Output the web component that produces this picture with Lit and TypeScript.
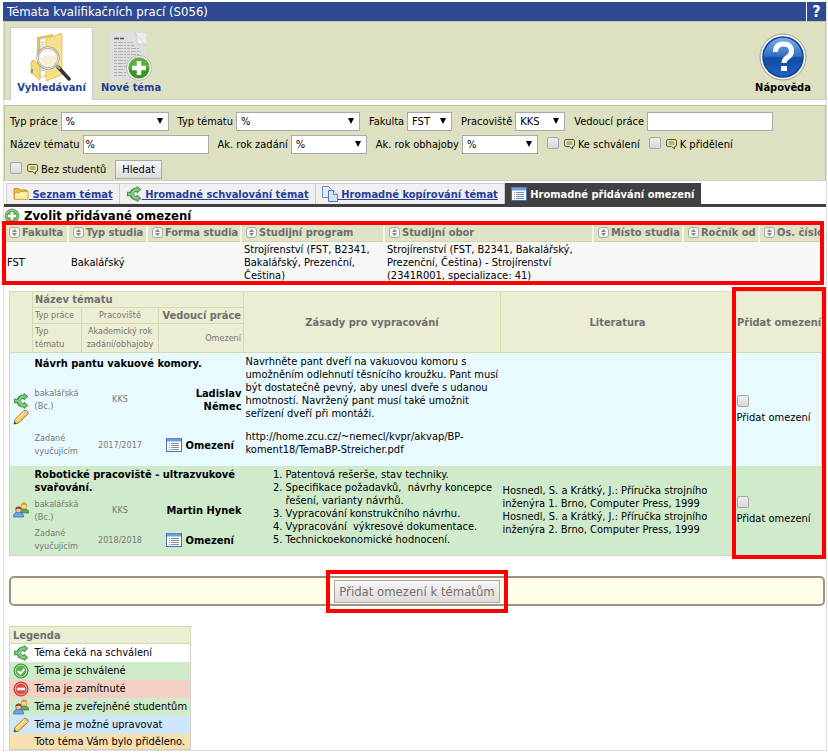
import { LitElement, html, css, svg } from "lit";
import { customElement } from "lit/decorators.js";

const ICONS: Record<string, unknown> = {
  approve: svg`<path d="M1 8h5M6 8C6 4.500 8 3.500 12 3.500M6 8c0 3.500 2 4.500 6 4.500" fill="none" stroke="#3f8f4c" stroke-width="4.500"/><path d="M11 .5l4 3-4 3.500zM11 9l4 3.500-4 3z" fill="#6dba6d" stroke="#3f8f4c" stroke-width=".8"/><path d="M2 8h5M6.500 8C6.500 5 8 3.500 12 3.500M6.500 8c0 3 1.500 4.500 5.500 4.500" fill="none" stroke="#85c885" stroke-width="2.500"/>`,
  pencil: svg`<path d="M1 15l1-4.500L11 1.500q2-1 3.500 1t0 3L5.500 14z" fill="#f7cf62" stroke="#ad7420"/><path d="M3.500 11L11.500 3" stroke="#fff0a8" stroke-width="1.500"/><path d="M10.500 2l3.500 3.500" stroke="#c9cdd6" stroke-width="1.500"/><path d="M1 15l.5-2.500 2 2z" fill="#333"/>`,
  users: svg`<path d="M6 11q0-4 5-4t5 4z" fill="#5aa858" stroke="#2d7a35" stroke-width=".6"/><circle cx="11" cy="4" r="3" fill="#fbd69a" stroke="#c48a2c" stroke-width=".7"/><path d="M8 3.500q0-3 3-3t3 3q-3-1.500-6 0z" fill="#dc9f2e"/><path d="M.5 15q0-5 5-5t5 5z" fill="#6ba5ee" stroke="#2b62b5" stroke-width=".7"/><circle cx="5.500" cy="8" r="2.800" fill="#f5c49b" stroke="#80502c" stroke-width=".7"/><path d="M2.500 7.500q0-3 3-3t3 3q-3-1.500-6 0z" fill="#80502c"/>`,
  list: svg`<rect x=".5" y="1.500" width="15" height="13" fill="#fff" stroke="#4a6eb5"/><path d="M1 3h14" stroke="#6f9be0" stroke-width="3"/><path d="M3 6.500h1M3 8.500h1M3 10.500h1M3 12.500h1M5 6.500h8M5 8.500h8M5 10.500h8M5 12.500h8" stroke="#8290a8"/>`,
  folder: svg`<path d="M1 13V2.500h5l1 1.500h7v9z" fill="#e9b94c" stroke="#c99a35"/><path d="M1.500 13.500V7h5l1-1.500H15v8z" fill="#ffe796" stroke="#d7a637"/><path d="M3 8.500h10" stroke="#fffbe0" stroke-width="1.500"/>`,
  copy: svg`<path d="M.5.500h6l3 3v8h-9z" fill="#e1ecfd" stroke="#6b8fc9"/><path d="M6.500 4.500h5l4 4v7h-9z" fill="#d2e3fc" stroke="#5078b8"/><path d="M11.500 4.500v4h4" fill="#fff" stroke="#5078b8"/>`,
  plus: svg`<circle cx="8" cy="8" r="7" fill="#5fae55" stroke="#6c9b65"/><circle cx="8" cy="8" r="5.800" fill="none" stroke="#a9d6a0" stroke-width=".8"/><path d="M8 4v8M4 8h8" stroke="#fff" stroke-width="2.600"/>`,
  ok: svg`<circle cx="8" cy="8" r="7" fill="#58b14e" stroke="#3c8a3c"/><circle cx="8" cy="8" r="5.800" fill="none" stroke="#b9e3ae"/><path d="M4.800 8l2.500 2.500L11.500 6" fill="none" stroke="#fff" stroke-width="2"/>`,
  deny: svg`<circle cx="8" cy="8" r="7" fill="#dc4c42" stroke="#b33a34"/><circle cx="8" cy="8" r="5.800" fill="none" stroke="#f2a8a0"/><path d="M4 8h8" stroke="#fff" stroke-width="2.600"/>`,
};

const icon = (name: string) =>
  html`<svg class="ico" viewBox="0 0 16 16" aria-hidden="true">${ICONS[name]}</svg>`;

const sortIcon = html`<svg class="sort" viewBox="0 0 11 11" aria-hidden="true">
  <rect x=".5" y=".5" width="10" height="10" rx="2.500" fill="#f4f4f0" stroke="#aaa" />
  <path d="M3 5l2.500-3L8 5zM3 6l2.500 3L8 6z" fill="#888" />
</svg>`;

const noteIcon = html`<svg class="note" viewBox="0 0 11 11" aria-hidden="true">
  <path d="M2 .5h7q1.500 0 1.500 1.500v4q0 1.500-1.500 1.500H8.500V10L5.500 7.500H2Q.5 7.500.5 6V2Q.5.500 2 .5z" fill="#f0efb0" stroke="#55553c" />
  <path d="M2.500 3h6M2.500 5h6" stroke="#77774e" />
</svg>`;

const searchPicture = html`<svg class="big" viewBox="0 0 48 48" aria-hidden="true">
  <path d="M9 4L25 1v41L9 45z" fill="#e3bd55" />
  <path d="M12 6l13-3v36l-13 6z" fill="#f8f8f2" stroke="#bbb" stroke-width=".6" />
  <path d="M14 9v30M16 9v30" stroke="#aaa" stroke-dasharray="1 1" />
  <path d="M6 27q-3 0-3 3v10l9 7V33z" fill="#f6d977" stroke="#d9b04a" stroke-width=".7" />
  <path d="M4 36v4" stroke="#4a8ad0" stroke-width="1.500" />
  <path d="M18 6L34 0v42L18 48z" fill="#f8e08a" stroke="#dcb544" stroke-width=".7" />
  <path d="M30 34L41 46" stroke="#333" stroke-width="3.500" stroke-linecap="round" />
  <path d="M28 32l4 4" stroke="#aaa" stroke-width="2" />
  <circle cx="20" cy="25" r="10.500" fill="#f5f2e0" fill-opacity=".9" stroke="#8d8d83" stroke-width="2" />
  <circle cx="20" cy="25" r="10.500" fill="none" stroke="#f4f4ee" />
  <path d="M12 25q1-7 8-7 6 0 7 5-8-2-15 2z" fill="#fff" />
</svg>`;

const newPicture = html`<svg class="big" viewBox="0 0 48 48" aria-hidden="true">
  <path d="M3 0h25l11 13v35H3z" fill="#dedede" />
  <path d="M28 0h11v13z" fill="#ececec" />
  <path d="M28 0q4 7 2 11 6-2 9 2z" fill="#fafafa" stroke="#bbb" stroke-width=".5" />
  <path d="M7 5.500h11" stroke="#555" stroke-width="1.500" stroke-dasharray="5 1 4 1" />
  <path d="M7 9.500h19M7 12.500h20M7 15.500h26M7 18.500h27M7 21.500h25M7 24.500h18M7 27.500h14M7 30.500h13M7 33.500h12M7 36.500h11M7 39.500h12M7 42.500h13" stroke="#b0b0b0" stroke-dasharray="3 1 5 1 2 1" />
  <circle cx="32" cy="35" r="12.500" fill="#f4f4f4" stroke="#aaa" stroke-width=".8" />
  <circle cx="32" cy="35" r="10.500" fill="#3c961f" />
  <path d="M21.500 35a10.500 10.500 0 0 1 21 0q-10 3-21 0z" fill="#6ab845" opacity=".7" />
  <path d="M32 28v14M25 35h14" stroke="#fff" stroke-width="4.500" />
</svg>`;

const helpPicture = html`<svg class="big" viewBox="0 0 48 48" aria-hidden="true">
  <defs>
    <linearGradient id="blue" x2="0" y2="1">
      <stop stop-color="#7cb2e8" /><stop offset=".48" stop-color="#2e70c4" />
      <stop offset=".52" stop-color="#124ba4" /><stop offset="1" stop-color="#1c62c4" />
    </linearGradient>
  </defs>
  <circle cx="24" cy="24" r="23" fill="#f6f6f6" stroke="#9b9b9b" />
  <circle cx="24" cy="24" r="20" fill="url(#blue)" stroke="#15438c" stroke-width="1.500" />
  <path d="M16.500 19q0-8 8-8t8 7q0 4-4 6.500-3.500 2-3.500 5.500" fill="none" stroke="#fff" stroke-width="5" />
  <rect x="22" y="33" width="6" height="5" fill="#fff" />
</svg>`;

const select = (label: string, value: string, width: string) => html`<label class="field"
  >${label}<span class="pick ${width}"><select><option>${value}</option></select></span></label>`;

const check = (label: string) =>
  html`<label class="field check"><input type="checkbox" />${noteIcon}<span>${label}</span></label>`;

const TABS: [string, string][] = [
  ["folder", "Seznam témat"],
  ["approve", "Hromadné schvalování témat"],
  ["copy", "Hromadné kopírování témat"],
  ["list", "Hromadné přidávání omezení"],
];

const LIMITS: [string, string][] = [
  ["Fakulta", "FST"],
  ["Typ studia", "Bakalářský"],
  ["Forma studia", ""],
  ["Studijní program", "Strojírenství (FST, B2341, Bakalářský, Prezenční, Čeština)"],
  ["Studijní obor", "Strojírenství (FST, B2341, Bakalářský, Prezenční, Čeština) - Strojírenství (2341R001, specializace: 41)"],
  ["Místo studia", ""],
  ["Ročník od", ""],
  ["Os. číslo", ""],
];

const LEGEND: [string, string, string][] = [
  ["", "approve", "Téma čeká na schválení"],
  ["green", "ok", "Téma je schválené"],
  ["red", "deny", "Téma je zamítnuté"],
  ["green", "users", "Téma je zveřejněné studentům"],
  ["blue", "pencil", "Téma je možné upravovat"],
  ["orange", "", "Toto téma Vám bylo přiděleno."],
];

interface Topic {
  tone: string;
  icons: string[];
  title: string;
  year: string;
  tutor: string;
  rules: unknown;
  books: unknown;
}

const TOPICS: Topic[] = [
  {
    tone: "cyan",
    icons: ["approve", "pencil"],
    title: "Návrh pantu vakuové komory.",
    year: "2017/2017",
    tutor: "Ladislav Němec",
    rules: html`<p>Navrhněte pant dveří na vakuovou komoru s umožněním odlehnutí těsnícího kroužku. Pant musí být dostatečně pevný, aby unesl dveře s udanou hmotností. Navržený pant musí také umožnit seřízení dveří při montáži.</p>
      <p>http://home.zcu.cz/~nemecl/kvpr/akvap/BP-koment18/TemaBP-Streicher.pdf</p>`,
    books: "",
  },
  {
    tone: "green",
    icons: ["users"],
    title: "Robotické pracoviště - ultrazvukové svařování.",
    year: "2018/2018",
    tutor: "Martin Hynek",
    rules: html`<ol>
      <li>Patentová rešerše, stav techniky.</li>
      <li>Specifikace požadavků,&nbsp; návrhy koncepce řešení, varianty návrhů.</li>
      <li>Vypracování konstrukčního návrhu.</li>
      <li>Vypracování&nbsp; výkresové dokumentace.</li>
      <li>Technickoekonomické hodnocení.</li>
    </ol>`,
    books: html`Hosnedl, S. a Krátký, J.: Příručka strojního inženýra 1. Brno, Computer Press, 1999<br />Hosnedl, S. a Krátký, J.: Příručka strojního inženýra 2. Brno, Computer Press, 1999`,
  },
];

@customElement("app-root")
export class AppRoot extends LitElement {
  static styles = css`
    :host {
      display: block;
      padding: 2px 1px 2px 3px;
      font: 11px/13px "DejaVu Sans Condensed", "Noto Sans", sans-serif;
      color: #000;
      background: #fff;
    }
    * { box-sizing: border-box; }
    .page { border: solid #ddd; border-width: 0 1px 1px; }
    .ico { display: block; width: 16px; height: 16px; flex: none; }
    .big { display: block; width: 48px; height: 48px; }

    .title { display: flex; height: 19px; margin-left: -1px; background: #2f4a93; color: #fff; }
    .title h1 { flex: 1; margin: 0; padding: 0 4px; font-size: 13px; line-height: 19px; font-weight: 400; }
    .title a { width: 20px; border-left: 1px solid #fff; color: #fff; text-align: center; text-decoration: none; font-weight: 700; font-size: 16px; line-height: 20px; }

    .tools { display: flex; height: 79px; padding: 5px 12px 0 5px; background: #dde1c1; border: 1px solid #c3cb9f; border-bottom-color: #ccc; }
    .tool { display: flex; flex-direction: column; align-items: center; width: 83px; height: 73px; padding: 5px 0 0; border: 1px solid transparent; border-bottom: 0; font-weight: 700; line-height: 14px; color: #233f99; text-decoration: none; }
    .tool.on { background: #fff; border-color: #ccc; }
    .tool.new { width: 76px; }
    .tool.help { margin-left: auto; width: 60px; color: #000; }

    .form { display: grid; gap: 4px; margin-top: 5px; padding: 6px 5px 1px; align-content: start; background: #dde1c1; border: 1px solid #b9c88c; border-bottom-color: #ccc; }
    .line { display: flex; align-items: center; gap: 9px; height: 19px; }
    .line.last { height: 21px; align-items: end; }
    .field { display: flex; align-items: center; gap: 3px; white-space: nowrap; }
    .check input { margin: 0 2px 4px 0; }
    .line.last .check { height: 19px; }
    select, .text { height: 19px; margin: 0; padding: 0 4px; border: 1px solid #a9a9a9; border-radius: 0; background: #fff; color: #000; font: inherit; }
    .text { padding: 0 2px; width: 126px; }
    .pick { position: relative; display: flex; }
    .pick select { appearance: none; width: 100%; }
    .pick::after { content: ""; position: absolute; right: 6px; top: 6px; border: 3px solid transparent; border-top: 6px solid #000; border-bottom: 0; pointer-events: none; }
    .w108 { width: 108px; }
    .w124 { width: 124px; }
    .w76 { width: 76px; }
    .w45 { width: 45px; }
    .w50 { width: 50px; }
    input[type="checkbox"] { appearance: none; width: 12px; height: 12px; margin: 0; border: 1px solid #a8a8a8; border-radius: 2px; background: linear-gradient(#efefef, #d9d9d9); flex: none; }
    .check input[type="checkbox"] { margin: 0 2px 4px 0; }
    .note { width: 11px; height: 11px; flex: none; }
    button { height: 19px; padding: 0 6px; border: 1px solid #a9a9a9; border-radius: 0; background: linear-gradient(#f6f6f6, #dcdcdc); color: #000; font: inherit; }

    .tabs { display: flex; margin-top: 2px; padding-left: 2px; border-bottom: 3px solid #404040; }
    .tab { display: flex; align-items: center; height: 21px; padding: 0 6px; background: #f1eff0; border: solid #ccc; border-width: 1px 1px 0 0; color: #233f99; font-weight: 700; white-space: nowrap; }
    .tab:first-child { border-left-width: 1px; }
    .tab.on { background: #404040; border-color: #404040; color: #fff; text-decoration: none; }

    h2 { display: flex; align-items: center; gap: 4px; height: 18px; margin: 0; font-size: 13px; line-height: 16px; }
    table { border-collapse: collapse; }
    th { color: #6e6e6e; font-weight: 700; }
    td { padding: 0; }
    .framed { position: relative; }
    .frame { position: absolute; border: 4px solid #f00; pointer-events: none; }

    .limits .frame { inset: -4px 2px 0 -2px; }
    .limits table { width: 100%; table-layout: fixed; }
    .limits th { height: 16px; padding: 0; background: #e0e3c6; border-right: 2px solid #f5f5e8; border-bottom: 1px solid #cfd3ae; text-align: left; white-space: nowrap; }
    .limits th span { display: flex; align-items: center; gap: 2px; padding-left: 4px; }
    .limits th:first-child span { padding-left: 5px; }
    .limits td { height: 44px; padding: 0 0 2px 3px; background: #f7f7f7; }
    .sort { width: 11px; height: 11px; flex: none; }
    .c64 { width: 64px; }
    .c79 { width: 79px; }
    .c94 { width: 94px; }
    .c143 { width: 143px; }
    .c90 { width: 90px; }
    .c76 { width: 76px; }
    .c66 { width: 66px; }

    .topics { margin: 6px 4px 0 5px; }
    .topics .frame { inset: -4px -4px -3px auto; width: 94px; }
    .topics table { width: 100%; table-layout: fixed; border: 1px solid #d0d0c4; }
    .topics th { height: 16px; padding: 0 2px; background: #ebeed3; border: 1px solid #d6d9b0; white-space: nowrap; }
    .topics .tall th { height: 29px; }
    .topics th.lead { text-align: left; }
    .topics th.end { text-align: right; }
    .small { font-size: 9px; font-weight: 400; color: #777; }
    .topics th.small { white-space: normal; }
    .cyan { background: #e9faff; }
    .green { background: #cfebcb; }
    .red { background: #f5d0c5; }
    .blue { background: #cee7fd; }
    .orange { background: #f8dfb0; }
    .topics td { padding: 0 2px; }
    .topics td.icons { padding: 0 3px; }
    .h22 { height: 22px; }
    .h50 { height: 50px; }
    .h41 { height: 41px; }
    .h30 { height: 30px; }
    .c23 { width: 23px; }
    .c49 { width: 49px; }
    .c77 { width: 77px; }
    .c85 { width: 85px; }
    .c257 { width: 257px; }
    .c87 { width: 87px; }
    .name { font-weight: 700; }
    .mid { text-align: center; }
    .end { text-align: right; }
    .limit { display: flex; align-items: center; gap: 4px; padding-left: 5px; font-weight: 700; }
    .topics td.rules { padding: 2px 0 2px 2px; vertical-align: top; }
    p { margin: 0; }
    p + p { margin-top: 10px; }
    ol { margin: 0; padding: 0 0 0 40px; }
    .add { display: grid; gap: 4px; justify-items: start; }

    .bar { display: flex; justify-content: center; margin: 20px 1px 0 5px; height: 30px; align-items: center; border: 2px solid #a09280; border-radius: 5px; background: #fdffe8; }
    .bar .frame { inset: -10px -8px; }
    .bar button { display: block; height: 23px; width: 166px; padding: 0; font-size: 13px; line-height: 21px; color: #7d6e66; white-space: nowrap; }

    .legend { width: 182px; margin: 20px 0 0 5px; border: 1px solid #d0d0c4; }
    .legend th { height: 17px; padding: 0 3px; background: #ebeed3; border: 1px solid #d6d9b0; text-align: left; }
    .legend td { height: 18px; white-space: nowrap; }
    .legend td:first-child { width: 25px; padding-left: 3px; }
    .legend tr:last-child td { height: 16px; }
  `;

  private limits() {
    const widths = ["c64", "c79", "c94", "c143", "", "c90", "c76", "c66"];
    return html`<section class="framed limits">
      <table>
        <thead><tr>${LIMITS.map(([h], i) => html`<th class=${widths[i]}><span>${sortIcon}${h}</span></th>`)}</tr></thead>
        <tbody><tr>${LIMITS.map(([, v]) => html`<td>${v}</td>`)}</tr></tbody>
      </table>
      <div class="frame"></div>
    </section>`;
  }

  private topic(t: Topic, rows: string[]) {
    return html`<tr class="${t.tone} ${rows[0]}">
        <td rowspan="3" class="icons">${t.icons.map(icon)}</td>
        <td colspan="3" class="name">${t.title}</td>
        <td rowspan="3" class="rules">${t.rules}</td>
        <td rowspan="3">${t.books}</td>
        <td rowspan="3"><label class="add"><input type="checkbox" />Přidat omezení</label></td>
      </tr>
      <tr class="${t.tone} ${rows[1]}">
        <td class="small">bakalářská (Bc.)</td>
        <td class="small mid">KKS</td>
        <td class="name end">${t.tutor}</td>
      </tr>
      <tr class="${t.tone} ${rows[2]}">
        <td class="small">Zadané vyučujícím</td>
        <td class="small mid">${t.year}</td>
        <td><span class="limit">${icon("list")}Omezení</span></td>
      </tr>`;
  }

  render() {
    return html`<div class="page">
      <header class="title"><h1>Témata kvalifikačních prací (S056)</h1><a href="#">?</a></header>
      <nav class="tools">
        <a class="tool on" href="#">${searchPicture}Vyhledávaní</a>
        <a class="tool new" href="#">${newPicture}Nové téma</a>
        <a class="tool help" href="#">${helpPicture}Nápověda</a>
      </nav>
      <form class="form">
        <div class="line">
          ${select("Typ práce", "%", "w108")} ${select("Typ tématu", "%", "w124")}
          ${select("Fakulta", "FST", "w45")} ${select("Pracoviště", "KKS", "w50")}
          <label class="field">Vedoucí práce<input class="text" type="text" /></label>
        </div>
        <div class="line">
          <label class="field">Název tématu<input class="text" type="text" value="%" /></label>
          ${select("Ak. rok zadání", "%", "w76")} ${select("Ak. rok obhajoby", "%", "w76")}
          ${check("Ke schválení")} ${check("K přidělení")}
        </div>
        <div class="line last">${check("Bez studentů")}<button type="button">Hledat</button></div>
      </form>
      <nav class="tabs">
        ${TABS.map(([i, t], n) => html`<a class="tab ${n === 3 ? "on" : ""}" href="#">${icon(i)}<span>&nbsp;${t}</span></a>`)}
      </nav>
      <h2>${icon("plus")}Zvolit přidávané omezení</h2>
      ${this.limits()}
      <section class="framed topics">
        <table>
          <colgroup>
            <col class="c23" /><col class="c49" /><col class="c77" /><col class="c85" />
            <col class="c257" /><col /><col class="c87" />
          </colgroup>
          <thead>
            <tr>
              <th rowspan="3"></th>
              <th colspan="3" class="lead">Název tématu</th>
              <th rowspan="3">Zásady pro vypracování</th>
              <th rowspan="3">Literatura</th>
              <th rowspan="3">Přidat omezení</th>
            </tr>
            <tr><th class="small lead">Typ práce</th><th class="small">Pracoviště</th><th class="end">Vedoucí práce</th></tr>
            <tr class="tall"><th class="small lead">Typ tématu</th><th class="small">Akademický rok zadání/obhajoby</th><th class="small end">Omezení</th></tr>
          </thead>
          <tbody>
            ${this.topic(TOPICS[0], ["h22", "h50", "h41"])}
            ${this.topic(TOPICS[1], ["h30", "h30", "h30"])}
          </tbody>
        </table>
        <div class="frame"></div>
      </section>
      <div class="bar">
        <div class="framed"><button type="button">Přidat omezení k tématům</button><div class="frame"></div></div>
      </div>
      <table class="legend">
        <thead><tr><th colspan="2">Legenda</th></tr></thead>
        <tbody>
          ${LEGEND.map(([tone, i, t]) => html`<tr class=${tone}><td>${i ? icon(i) : ""}</td><td>${t}</td></tr>`)}
        </tbody>
      </table>
    </div>`;
  }
}
